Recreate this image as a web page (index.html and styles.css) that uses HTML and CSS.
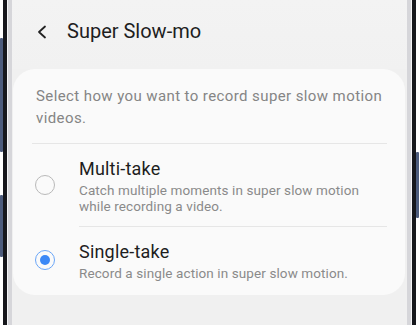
FILE: index.html
```html
<!DOCTYPE html>
<html>
<head>
<meta charset="utf-8">
<link rel="stylesheet" href="styles.css">
</head>
<body>
<div class="phone">
  <div class="bezel-left">
    <div class="buttons">
      <div class="btn btn-a"></div>
      <div class="btn btn-b"></div>
    </div>
    <div class="edge"></div>
    <div class="gap"></div>
    <div class="rim"></div>
  </div>
  <div class="screen">
    <div class="header">
      <svg class="back" width="12" height="14" viewBox="0 0 12 14"><polyline points="9,1.5 3,7 9,12.5" fill="none" stroke="#222" stroke-width="1.8" stroke-linecap="round" stroke-linejoin="round"/></svg>
      <span class="title">Super Slow-mo</span>
    </div>
    <div class="card">
      <p class="desc">Select how you want to record super slow motion videos.</p>
      <div class="divider full"></div>
      <div class="option">
        <span class="radio"></span>
        <div class="text">
          <div class="opt-title">Multi-take</div>
          <div class="opt-sub">Catch multiple moments in super slow motion while recording a video.</div>
        </div>
      </div>
      <div class="divider inset"></div>
      <div class="option last">
        <span class="radio checked"></span>
        <div class="text">
          <div class="opt-title">Single-take</div>
          <div class="opt-sub">Record a single action in super slow motion.</div>
        </div>
      </div>
    </div>
  </div>
  <div class="bezel-right">
    <div class="rim"></div>
    <div class="gap"></div>
    <div class="edge"></div>
    <div class="buttons">
      <div class="btn btn-c"></div>
    </div>
  </div>
</div>
</body>
</html>
```
FILE: styles.css
```css
html, body {
  margin: 0;
  padding: 0;
  background: #ffffff;
}
body {
  width: 420px;
  height: 325px;
  overflow: hidden;
  font-family: Roboto, "Noto Sans", "Liberation Sans", sans-serif;
}
.phone {
  display: flex;
  height: 325px;
}
.bezel-left, .bezel-right {
  display: flex;
  height: 100%;
}
.buttons {
  width: 3px;
  display: flex;
  flex-direction: column;
}
.btn {
  width: 3px;
  background: #4c5b7c;
  border-radius: 1px;
}
.btn-a { margin-top: 38px; height: 114px; }
.btn-b { margin-top: 43px; height: 62px; }
.btn-c { margin-top: 152px; height: 66px; }
.edge {
  width: 4px;
  background: #16171c;
}
.gap {
  width: 1px;
  background: #f4f4f6;
}
.rim {
  width: 4px;
  background: #d6d6da;
}
.bezel-right::after {
  content: "";
  width: 1px;
}
.screen {
  flex: 1;
  background: #f0f0f0;
  display: flex;
  flex-direction: column;
}
.header {
  height: 69px;
  box-sizing: border-box;
  padding-top: 19px;
  padding-left: 24px;
  display: flex;
  align-items: flex-start;
  background: linear-gradient(#f3f3f3, #f1f1f1);
}
.back {
  margin-top: 6px;
  margin-right: 19px;
}
.title {
  font-size: 20px;
  line-height: 24px;
  color: #1e1e1e;
}
.card {
  margin: 0 2px 0 1px;
  background: #fafafa;
  border-radius: 22px;
  padding-top: 16px;
}
.desc {
  margin: 0;
  padding: 0 14px 0 23px;
  font-size: 15px;
  line-height: 22px;
  letter-spacing: 0.4px;
  color: #858585;
}
.divider {
  height: 1px;
  background: #e6e6e6;
}
.divider.full {
  margin: 14px 18px 0 19px;
}
.divider.inset {
  margin: 0 18px 0 66px;
}
.option {
  display: flex;
  align-items: center;
  padding: 14px 18px 12px 22px;
}
.option.last {
  padding-bottom: 14px;
}
.radio {
  width: 20px;
  height: 20px;
  box-sizing: border-box;
  border: 1.5px solid #b9b9b9;
  border-radius: 50%;
  flex: none;
  margin-right: 24px;
  margin-top: -2px;
  display: flex;
  align-items: center;
  justify-content: center;
}
.radio.checked {
  border-color: #6aa6f8;
  margin-top: -3px;
}
.radio.checked::after {
  content: "";
  width: 10px;
  height: 10px;
  border-radius: 50%;
  background: #3b88f6;
}
.opt-title {
  font-size: 18px;
  line-height: 22px;
  letter-spacing: 0.2px;
  color: #1e1e1e;
}
.opt-sub {
  margin-top: 2px;
  font-size: 13.5px;
  line-height: 16px;
  letter-spacing: 0.1px;
  color: #8a8a8a;
}
```
